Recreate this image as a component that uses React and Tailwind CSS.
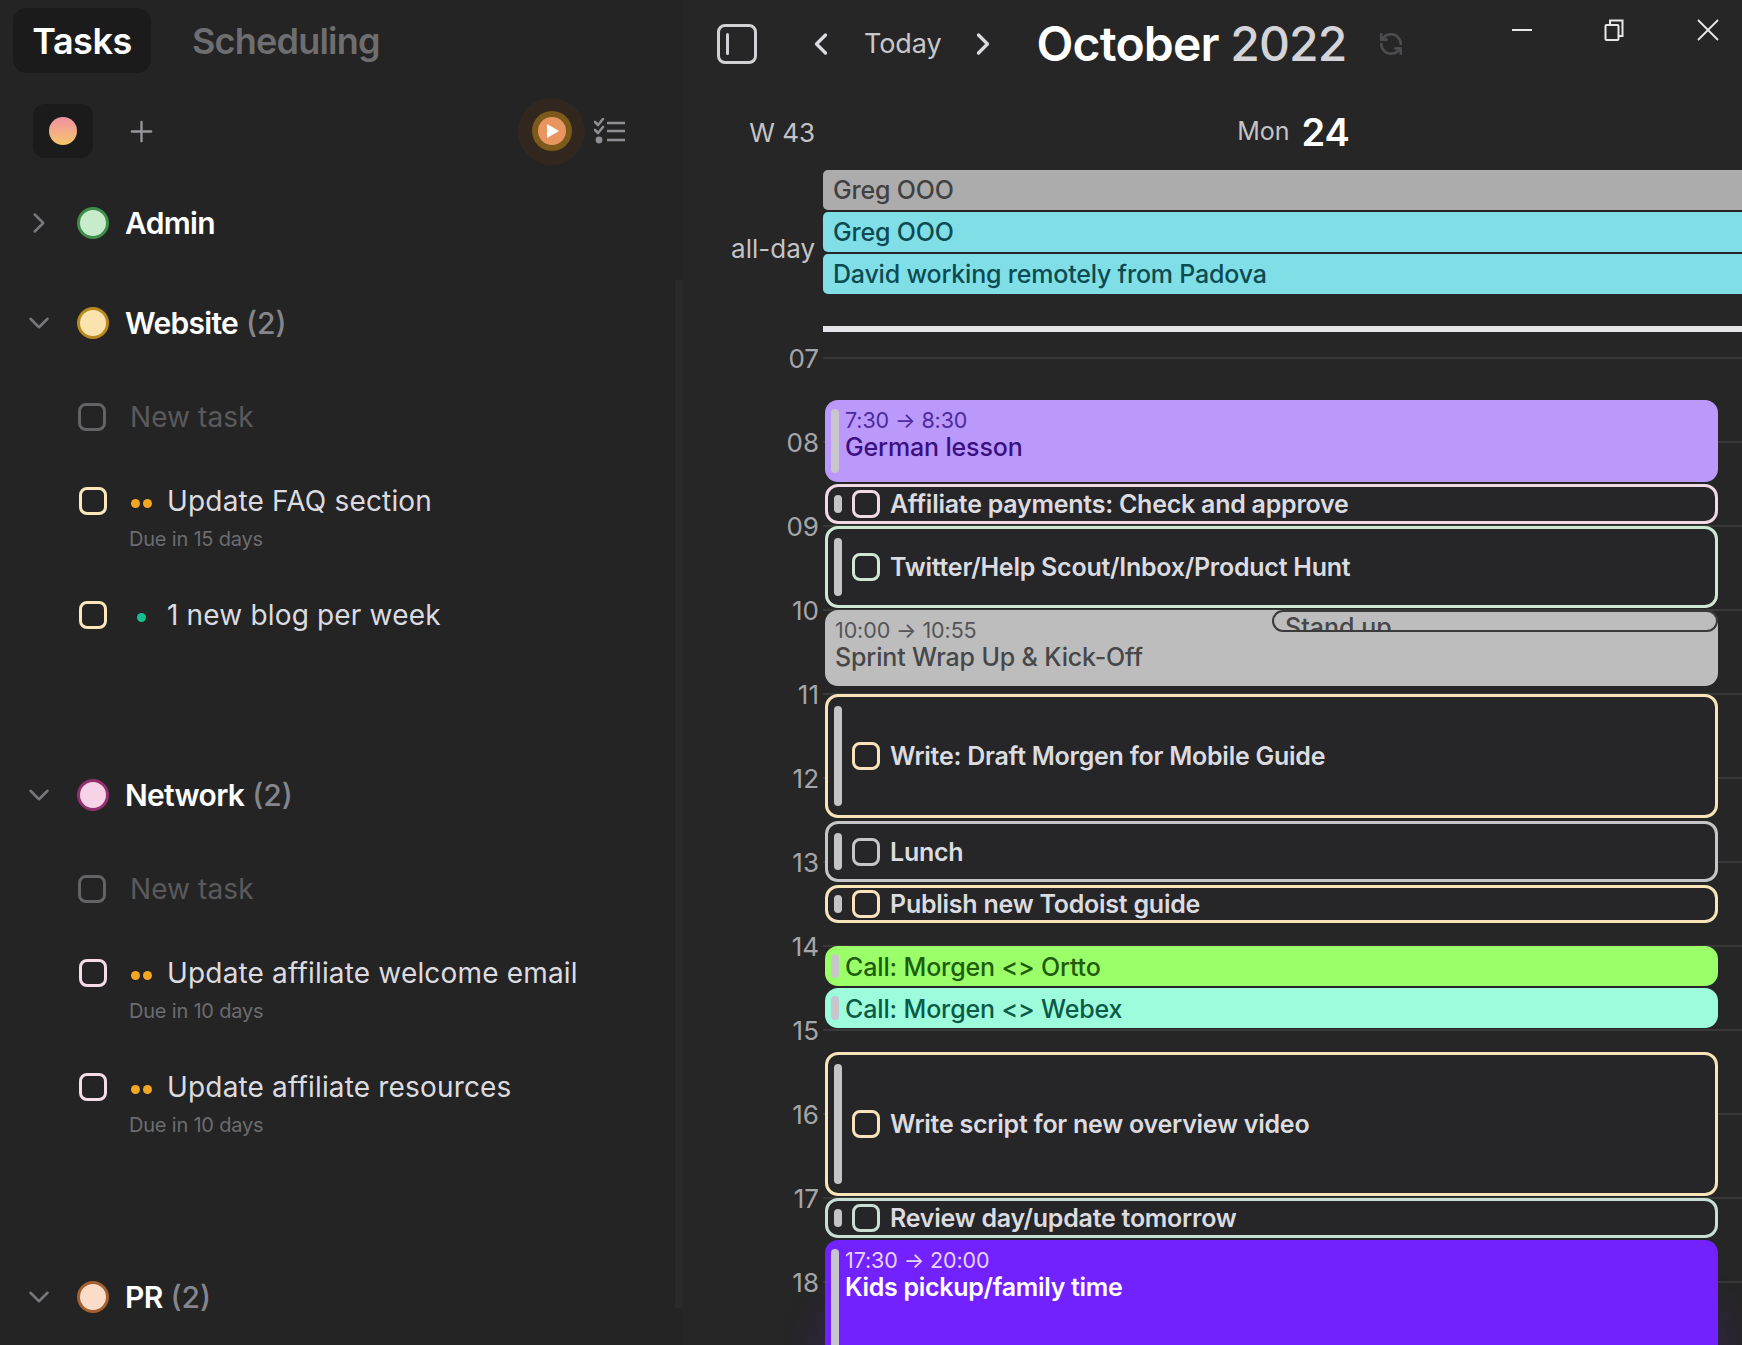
import React from 'react';
import { ChevronDown, ChevronLeft, ChevronRight, Plus, RefreshCcw } from 'lucide-react';

const Checkbox = ({ color }) => (
  <span className={`block w-[28px] h-[28px] shrink-0 border-[3px] rounded-[8px] ${color}`} />
);

const Dots = ({ kind }) => (
  <span className="flex items-center justify-center gap-[3px] w-[22px] shrink-0 mr-[15px] mt-[4px]">
    {kind === 'medium' ? (
      <>
        <span className="w-[9px] h-[9px] rounded-full bg-[#f5a623]" />
        <span className="w-[9px] h-[9px] rounded-full bg-[#f5a623]" />
      </>
    ) : (
      <span className="w-[9px] h-[9px] rounded-full bg-[#14c08e]" />
    )}
  </span>
);

const ProjectRow = ({ name, count, ring, open, className }) => (
  <div className={`flex items-center h-[60px] ${className}`}>
    <span className="w-[77px] flex justify-center shrink-0 text-[#77777c]">
      {open ? (
        <ChevronDown size={34} strokeWidth={1.8} />
      ) : (
        <ChevronRight size={34} strokeWidth={1.8} />
      )}
    </span>
    <span className={`w-[32px] h-[32px] rounded-full border-[3px] shrink-0 ${ring}`} />
    <span className="ml-[16px] text-[30px] leading-[36px] font-semibold text-white tracking-[-0.7px]">{name}</span>
    {count && <span className="ml-[8px] text-[30px] leading-[36px] font-medium text-[#85858b]">({count})</span>}
  </div>
);

const NewTask = () => (
  <div className="flex items-center h-[84px] pl-[78px]">
    <Checkbox color="border-[#636366]" />
    <span className="ml-[24px] text-[28px] leading-[34px] tracking-[0.1px] text-[#5a5a5d]">New task</span>
  </div>
);

const TaskRow = ({ title, due, dots, box }) => (
  <div className={`pl-[79px] pt-[25px] ${due ? 'h-[114px]' : 'h-[84px]'}`}>
    <div className="flex items-center h-[34px]">
      <Checkbox color={box} />
      <span className="ml-[23px] flex items-center">
        <Dots kind={dots} />
        <span className="text-[28px] leading-[34px] tracking-[0.17px] text-[#dcdce0]">{title}</span>
      </span>
    </div>
    {due && <div className="ml-[50px] mt-[4px] text-[20px] leading-[34px] tracking-[-0.2px] text-[#6c6c6e]">{due}</div>}
  </div>
);

const ListIcon = () => (
  <svg width="32" height="26" viewBox="0 0 32 26" fill="none" stroke="#8e8e93" strokeWidth="2.6">
    <path d="M1 4l3 3 5-6M1 12l3 3 5-6" strokeLinecap="round" strokeLinejoin="round" />
    <path d="M13 5h18M13 13h18M13 22h18" />
    <circle cx="5" cy="22" r="3.4" fill="#8e8e93" stroke="none" />
  </svg>
);

const Sidebar = () => (
  <div className="w-[683px] shrink-0 h-full flex bg-[#242424]">
    <div className="flex-1 min-w-0">
      <div className="flex items-center pt-[8px] pl-[13px]">
        <div className="w-[138px] h-[65px] rounded-[14px] bg-[#1b1b1b] flex items-center justify-center text-[36px] font-semibold text-white tracking-[-0.5px]">
          Tasks
        </div>
        <div className="ml-[41px] text-[36px] font-semibold text-[#6e6e70] tracking-[-0.8px]">Scheduling</div>
      </div>
      <div className="flex items-center mt-[31px] pl-[33px] h-[54px]">
        <div className="w-[60px] h-[54px] rounded-[12px] bg-[#1b1b1b] flex items-center justify-center">
          <span className="w-[28px] h-[28px] rounded-full bg-gradient-to-b from-[#f08fa0] to-[#f6c667]" />
        </div>
        <Plus size={33} strokeWidth={1.7} className="ml-[32px] text-[#97979b]" />
        <div className="ml-[360px] w-[67px] h-[67px] rounded-full bg-[#31271e] flex items-center justify-center">
          <div className="w-[40px] h-[40px] rounded-full bg-[#7b5a1c] flex items-center justify-center">
            <div className="w-[28px] h-[28px] rounded-full bg-[#e9955f] flex items-center justify-center pl-[2px]">
              <svg width="12" height="14" viewBox="0 0 12 14">
                <path d="M0 0l12 7-12 7z" fill="#fff" />
              </svg>
            </div>
          </div>
        </div>
        <span className="ml-[9px]">
          <ListIcon />
        </span>
      </div>

      <ProjectRow name="Admin" ring="bg-[#c8ebcb] border-[#3f8f4a]" className="mt-[35px] mb-[40px]" />

      <ProjectRow name="Website" count="2" open ring="bg-[#fbe3ae] border-[#b88a20]" className="mb-[22px]" />
      <NewTask />
      <TaskRow title="Update FAQ section" due="Due in 15 days" dots="medium" box="border-[#fbe7ba]" />
      <TaskRow title="1 new blog per week" dots="low" box="border-[#fbe7ba]" />

      <ProjectRow name="Network" count="2" open ring="bg-[#f6d3e6] border-[#93306f]" className="mt-[108px] mb-[22px]" />
      <NewTask />
      <TaskRow title="Update affiliate welcome email" due="Due in 10 days" dots="medium" box="border-[#f6dbe9]" />
      <TaskRow title="Update affiliate resources" due="Due in 10 days" dots="medium" box="border-[#f6dbe9]" />

      <ProjectRow name="PR" count="2" open ring="bg-[#fadcc9] border-[#a5602f]" className="mt-[108px]" />
    </div>
    {/* scrollbar */}
    <div className="w-[8px] shrink-0 pt-[280px] pb-[37px]">
      <div className="h-full rounded-[2px] bg-[#2a2a2a]" />
    </div>
  </div>
);

const TopBar = () => (
  <div className="flex items-start h-[88px]">
    <div className="flex items-center h-[88px] pl-[34px]">
      <div className="w-[40px] h-[40px] border-[3px] border-[#d2d2d6] rounded-[8px] flex items-center pl-[6px]">
        <span className="w-[3px] h-[22px] bg-[#d2d2d6] rounded-full" />
      </div>
      <ChevronLeft size={36} strokeWidth={2.2} className="ml-[46px] text-[#dcdce0]" />
      <span className="ml-[25px] pt-[1px] text-[27px] tracking-[-0.1px] text-[#c8c8cc]">Today</span>
      <ChevronRight size={36} strokeWidth={2.2} className="ml-[24px] text-[#dcdce0]" />
      <span className="ml-[35px] text-[48px] leading-[60px] tracking-[-0.8px] font-semibold text-white">
        October <span className="font-medium text-[#d4d4d8]">2022</span>
      </span>
      <RefreshCcw size={26} strokeWidth={2.4} className="ml-[31px] text-[#4d4d50]" />
    </div>
    <div className="ml-auto flex items-center h-[60px] pr-[23px]">
      <span className="w-[20px] h-[2px] bg-[#e8e8e8]" />
      <svg className="ml-[72px]" width="20" height="22" viewBox="0 0 20 22" fill="none" stroke="#e8e8e8" strokeWidth="2">
        <rect x="1.5" y="6" width="13" height="15" rx="1" />
        <path d="M6 6V1.5h12.5V17H14.5" />
      </svg>
      <svg className="ml-[73px]" width="22" height="22" viewBox="0 0 22 22" fill="none" stroke="#e8e8e8" strokeWidth="1.8">
        <path d="M1 1l20 20M21 1L1 21" />
      </svg>
    </div>
  </div>
);

const AllDayBar = ({ title, color, text }) => (
  <div className={`h-[40px] rounded-l-[5px] flex items-center pl-[10px] pt-[2px] text-[25px] tracking-[-0.2px] font-medium ${color} ${text}`}>{title}</div>
);

const Handle = ({ height }) => (
  <span className={`block w-[8px] shrink-0 ml-[6px] rounded-full bg-[#c4c4c6] ${height}`} />
);

const FilledEvent = ({ height, color, handle, time, title, timeColor, titleColor, weight = 'font-medium tracking-[-0.15px]', mt = 'mt-[2px]', shadow = '' }) => (
  <div className={`${height} ${mt} ${color} ${shadow} rounded-[13px] flex pl-[6px] overflow-hidden`}>
    <span className={`block w-[8px] shrink-0 rounded-full bg-[#c8c6cc] ${handle}`} />
    <div className={`pl-[6px] ${time ? 'pt-[5px]' : 'pt-[6px]'}`}>
      {time && <div className={`text-[21.5px] leading-[30px] tracking-[-0.1px] ${timeColor}`}>{time}</div>}
      <div className={`text-[25px] leading-[30px] ${time ? '-mt-[3px]' : ''} ${weight} ${titleColor}`}>{title}</div>
    </div>
  </div>
);

const TaskEvent = ({ height, border, handle, title, mt = 'mt-[2px]' }) => (
  <div className={`${height} ${mt} border-[3px] ${border} rounded-[13px] bg-[#262628] flex items-center`}>
    <Handle height={handle} />
    <span className="ml-[10px]">
      <Checkbox color={border} />
    </span>
    <span className="ml-[10px] text-[25px] leading-[30px] tracking-[-0.25px] font-semibold text-[#dcdce0]">{title}</span>
  </div>
);

const hours = ['07', '08', '09', '10', '11', '12', '13', '14', '15', '16', '17', '18'];

const Grid = () => (
  <div className="grid mt-[26px]">
    {/* hour rows */}
    <div className="col-start-1 row-start-1">
      {hours.map((h) => (
        <div key={h} className="flex h-[84px]">
          <div className="w-[136px] shrink-0 text-right -translate-y-1/2 mt-[1px] h-[34px] text-[26px] leading-[34px] text-[#a6a6aa]">{h}</div>
          <div className="ml-[4px] flex-1 h-[2px] -translate-y-[1px] bg-[#39393a]" />
        </div>
      ))}
    </div>
    {/* events */}
    <div className="relative z-10 col-start-1 row-start-1 pl-[142px] pr-[24px] pt-[42px]">
      <FilledEvent
        mt="mt-0"
        height="h-[82px]"
        color="bg-[#bb99fa]"
        handle="h-[64px] mt-[9px]"
        time="7:30 → 8:30"
        title="German lesson"
        timeColor="text-[#4c2aa0]"
        titleColor="text-[#3a1080]"
      />
      <TaskEvent height="h-[40px]" border="border-[#f2d9e6]" handle="h-[18px]" title="Affiliate payments: Check and approve" />
      <TaskEvent height="h-[82px]" border="border-[#cfe8d4]" handle="h-[58px]" title="Twitter/Help Scout/Inbox/Product Hunt" />
      <div className="relative h-[76px] mt-[2px] bg-[#bdbdbd] rounded-[13px] pl-[10px] pt-[5px]">
        <div className="text-[21.5px] leading-[30px] tracking-[-0.1px] text-[#555558]">10:00 → 10:55</div>
        <div className="-mt-[3px] text-[25px] leading-[30px] tracking-[-0.15px] font-medium text-[#47474a]">Sprint Wrap Up &amp; Kick-Off</div>
        <div className="absolute top-0 right-0 w-[446px] h-[22px] border-2 border-[#3a3a3c] rounded-[11px] overflow-hidden pl-[11px] text-[25px] leading-[30px] font-medium text-[#47474a]">
          Stand up
        </div>
      </div>
      <TaskEvent mt="mt-[8px]" height="h-[124px]" border="border-[#f8e4b8]" handle="h-[100px]" title="Write: Draft Morgen for Mobile Guide" />
      <TaskEvent mt="mt-[3px]" height="h-[61px]" border="border-[#c6c6c8]" handle="h-[37px]" title="Lunch" />
      <TaskEvent mt="mt-[3px]" height="h-[38px]" border="border-[#f8e4b8]" handle="h-[18px]" title="Publish new Todoist guide" />
      <FilledEvent
        mt="mt-[23px]"
        height="h-[40px]"
        color="bg-[#9aff69]"
        handle="h-[24px] mt-[8px]"
        title="Call: Morgen <> Ortto"
        titleColor="text-[#1f5c0c]"
      />
      <FilledEvent
        height="h-[40px]"
        color="bg-[#9dfcdb]"
        handle="h-[24px] mt-[8px]"
        title="Call: Morgen <> Webex"
        titleColor="text-[#0b5a48]"
      />
      <TaskEvent mt="mt-[24px]" height="h-[144px]" border="border-[#f8e4b8]" handle="h-[120px]" title="Write script for new overview video" />
      <TaskEvent height="h-[40px]" border="border-[#cadfd4]" handle="h-[18px]" title="Review day/update tomorrow" />
      <FilledEvent
        height="h-[210px]"
        color="bg-[#7222ff]"
        shadow="shadow-[0_70px_40px_0_rgba(114,34,255,0.22)]"
        handle="h-[200px] mt-[9px]"
        time="17:30 → 20:00"
        title="Kids pickup/family time"
        timeColor="text-[#e9d4ff]"
        titleColor="text-white"
        weight="font-semibold tracking-[-0.3px]"
      />
    </div>
  </div>
);

const Calendar = () => (
  <div className="flex-1 min-w-0 h-full overflow-hidden">
    <TopBar />
    <div className="flex items-center h-[56px] mt-[16px]">
      <div className="w-[132px] shrink-0 text-right text-[26px] text-[#c4c4c8]">W 43</div>
      <div className="flex-1 flex items-center justify-center gap-[12px] pl-[30px]">
        <span className="text-[25px] text-[#c4c4c8]">Mon</span>
        <span className="text-[38px] leading-[44px] font-semibold text-white">24</span>
      </div>
    </div>
    <div className="flex mt-[10px]">
      <div className="w-[132px] shrink-0 text-right pt-[62px] text-[26px] leading-[34px] text-[#c4c4c8]">all-day</div>
      <div className="ml-[8px] flex-1 flex flex-col gap-[2px]">
        <AllDayBar title="Greg OOO" color="bg-[#acacac]" text="text-[#414141]" />
        <AllDayBar title="Greg OOO" color="bg-[#80dfe6]" text="text-[#0d4b52]" />
        <AllDayBar title="David working remotely from Padova" color="bg-[#80dfe6]" text="text-[#0d4b52]" />
      </div>
    </div>
    <div className="ml-[140px] mt-[32px] h-[6px] bg-[#e5e5ea]" />
    <Grid />
  </div>
);

export default function App() {
  return (
    <div className="w-[1742px] h-[1345px] overflow-hidden flex bg-[#262626] font-['Inter',sans-serif]">
      <Sidebar />
      <Calendar />
    </div>
  );
}
